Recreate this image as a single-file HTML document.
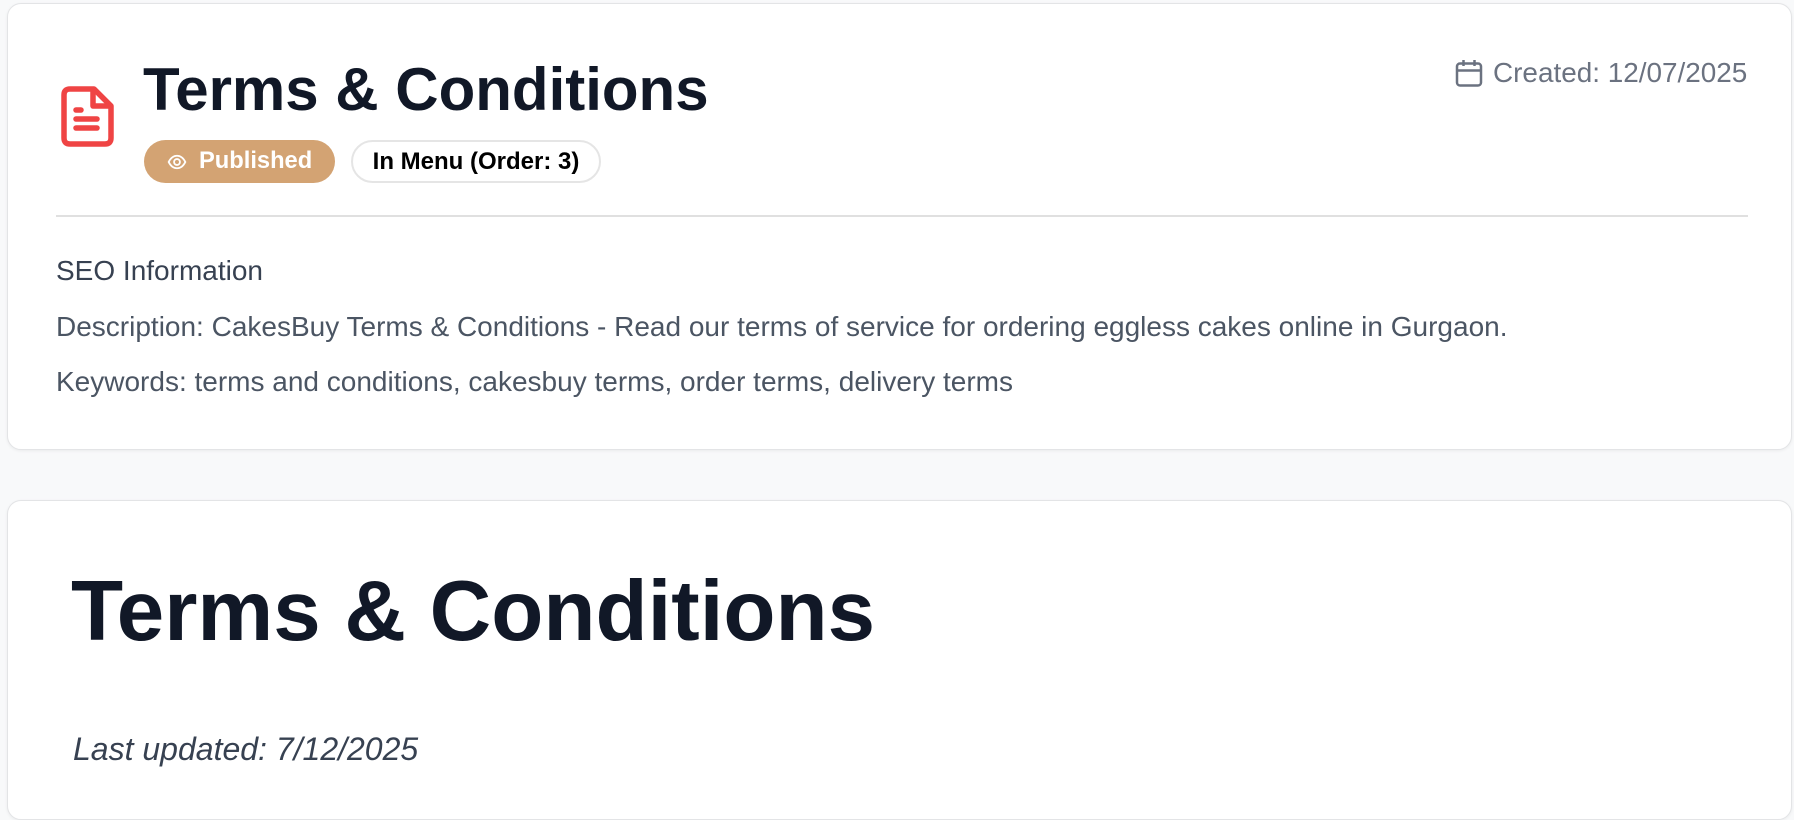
<!DOCTYPE html>
<html><head><meta charset="utf-8"><style>
*{margin:0;padding:0;box-sizing:border-box}
body{width:1794px;height:784px;overflow:hidden;background:#f8f9fa;font-family:"Liberation Sans",Helvetica,Arial,sans-serif;position:relative}
.card{position:absolute;left:7px;right:2px;background:#fff;border:1.5px solid #e3e4e6;border-radius:14px;box-shadow:0 1px 3px rgba(0,0,0,.06)}
.abs{position:absolute;white-space:nowrap}
</style></head><body>
<div class="card" style="top:3px;height:447px"></div>
<div class="card" style="top:500px;height:320px"></div>

<svg class="abs" style="left:60px;top:86px" width="56" height="62" viewBox="0 0 56 62">
<path d="M10 3 H34 L51 20 V52 Q51 58 45 58 H10 Q4 58 4 52 V9 Q4 3 10 3 Z" fill="none" stroke="#ef4444" stroke-width="5.5" stroke-linejoin="round"/>
<path d="M33 4 V20 H50" fill="none" stroke="#ef4444" stroke-width="5.5" stroke-linejoin="round"/>
<path d="M16 24 H21 M16 33 H37 M16 42 H37" stroke="#ef4444" stroke-width="5.5" stroke-linecap="round"/>
</svg>

<div class="abs" style="left:143px;top:55px;font-size:60px;font-weight:bold;color:#111827;line-height:70px">Terms &amp; Conditions</div>

<div class="abs" style="left:144px;top:140px;width:191px;height:43px;border-radius:22px;background:#d3a373;color:#fff;font-weight:bold;font-size:23.7px;line-height:43px;padding-left:55px">Published</div>
<svg class="abs" style="left:166px;top:152px" width="22" height="20" viewBox="0 0 24 24"><path d="M2 12 C5 6 9 4.5 12 4.5 C15 4.5 19 6 22 12 C19 18 15 19.5 12 19.5 C9 19.5 5 18 2 12 Z" fill="none" stroke="#fff" stroke-width="2.2"/><circle cx="12" cy="12" r="3.5" fill="none" stroke="#fff" stroke-width="2.2"/></svg>
<div class="abs" style="left:351px;top:140px;width:250px;height:43px;border-radius:22px;border:2px solid #e5e5e5;color:#000;font-weight:bold;font-size:24px;line-height:39px;text-align:center">In Menu (Order: 3)</div>

<svg class="abs" style="left:1454px;top:58px" width="30" height="30" viewBox="0 0 30 30"><rect x="3" y="5.5" width="24" height="22" rx="3" fill="none" stroke="#6b7280" stroke-width="2.5"/><path d="M3 12.5 H27 M9.5 2 V8 M20.5 2 V8" stroke="#6b7280" stroke-width="2.5"/></svg>
<div class="abs" style="left:1493px;top:55px;font-size:27.9px;color:#6b7280;line-height:36px">Created: 12/07/2025</div>

<div class="abs" style="left:56px;top:215px;width:1692px;height:1.5px;background:#e0e0e0"></div>

<div class="abs" style="left:56px;top:254px;font-size:28px;color:#374151;line-height:34px">SEO Information</div>
<div class="abs" style="left:56px;top:310px;font-size:28px;color:#4b5563;line-height:34px">Description: CakesBuy Terms &amp; Conditions - Read our terms of service for ordering eggless cakes online in Gurgaon.</div>
<div class="abs" style="left:56px;top:365px;font-size:28px;color:#4b5563;line-height:34px">Keywords: terms and conditions, cakesbuy terms, order terms, delivery terms</div>

<div class="abs" style="left:71px;top:562px;font-size:85.3px;font-weight:bold;color:#111827;line-height:100px">Terms &amp; Conditions</div>
<div class="abs" style="left:73px;top:729px;font-size:32px;font-style:italic;color:#374151;line-height:40px">Last updated: 7/12/2025</div>
</body></html>
